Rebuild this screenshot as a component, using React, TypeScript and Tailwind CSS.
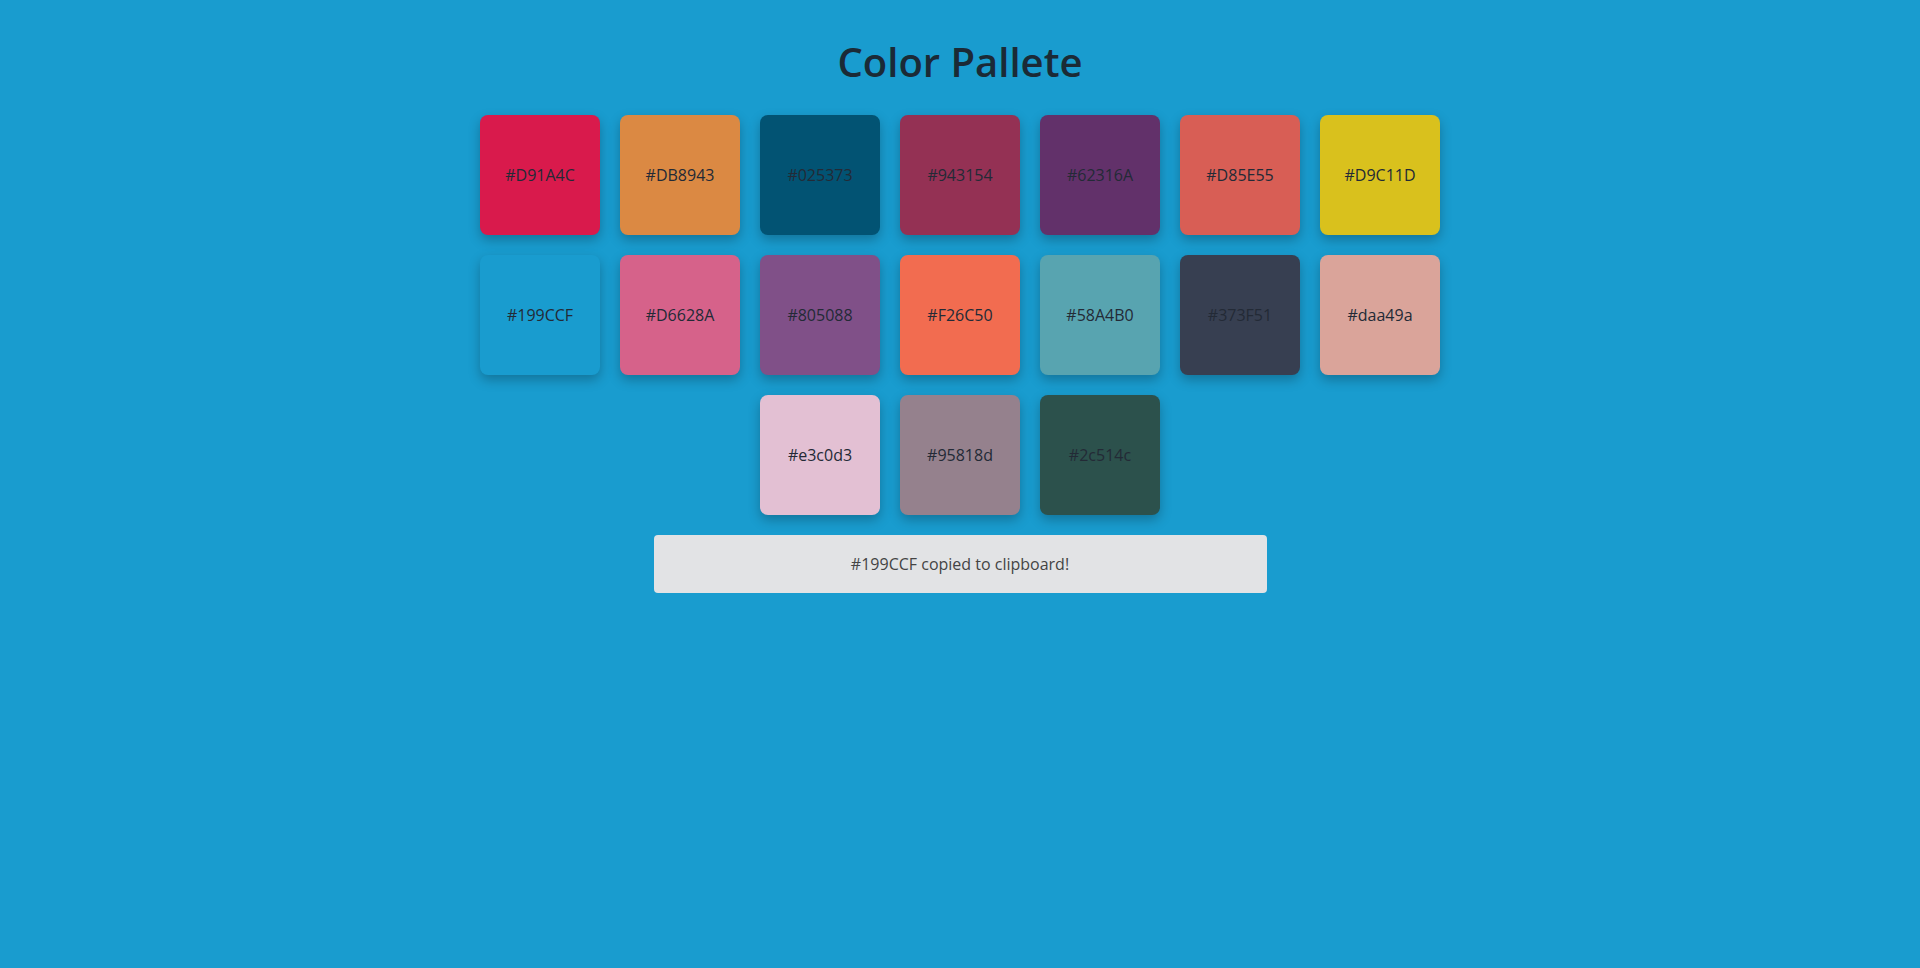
const colors = [
  "#D91A4C", "#DB8943", "#025373", "#943154", "#62316A", "#D85E55", "#D9C11D",
  "#199CCF", "#D6628A", "#805088", "#F26C50", "#58A4B0", "#373F51", "#daa49a",
  "#e3c0d3", "#95818d", "#2c514c",
];

export default function App() {
  return (
    <main className="min-h-screen bg-[#199CCF] pt-[38px] font-['Open_Sans',sans-serif]">
      <h1 className="text-center text-[40px] font-semibold leading-[48px] text-[#1b2a36]">Color Pallete</h1>

      <div className="mx-auto mt-[29px] flex w-[960px] flex-wrap justify-center gap-5">
        {colors.map((c) => (
          <button
            key={c}
            className="flex h-[120px] w-[120px] items-center justify-center rounded-lg text-base text-[#232a36] shadow-[0_5px_12px_rgba(0,0,0,0.25)]"
            style={{ backgroundColor: c }}
          >
            {c}
          </button>
        ))}
      </div>

      <div className="mx-auto mt-5 flex h-[58px] w-[613px] items-center justify-center rounded bg-[#e2e3e5] text-base text-[#444]">
        #199CCF copied to clipboard!
      </div>
    </main>
  );
}
